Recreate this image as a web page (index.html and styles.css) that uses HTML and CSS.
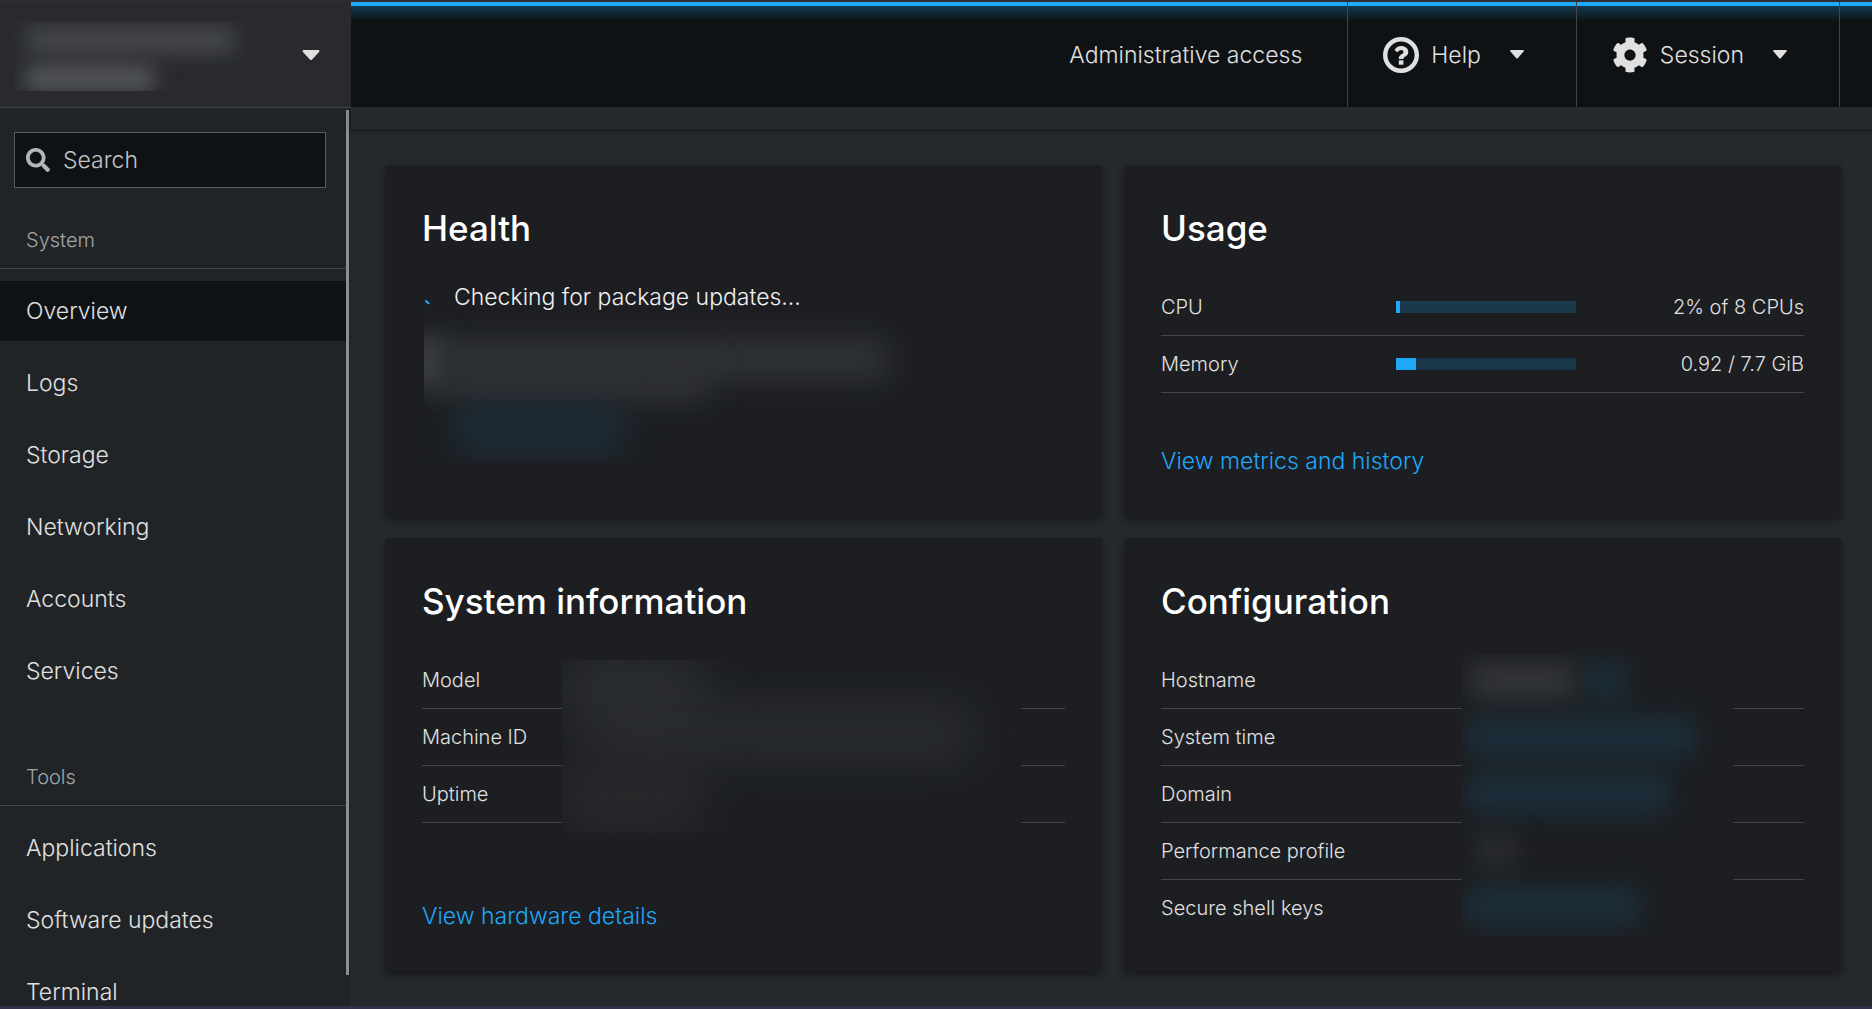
FILE: index.html
```html
<!DOCTYPE html>
<html lang="en">

<head>
    <meta charset="UTF-8">
    <meta name="viewport" content="width=device-width, initial-scale=1.0">
    <title>Overview</title>
    <link rel="stylesheet" href="styles.css">
</head>

<body>
    <div class="shell">
        <!-- Sidebar -->
        <aside class="sidebar">
            <button type="button" class="host-switcher" aria-label="Hosts">
                <span class="host-name">
                    <span class="smudge host-user"></span>
                    <span class="smudge host-address"></span>
                </span>
                <svg class="caret-lg" viewBox="0 0 20 12"><path d="M2 0H18Q20 0 19 2L11.500 10Q10 12 8.500 10L1 2Q0 0 2 0Z" /></svg>
            </button>
            <div class="sidebar-scroll">
                <nav class="nav">
                    <div class="search">
                        <svg class="search-icon" viewBox="0 0 512 512"><path d="M505 442.700L405.300 343c-4.500-4.500-10.600-7-17-7H372c27.600-35.300 44-79.700 44-128C416 93.100 322.900 0 208 0S0 93.100 0 208s93.100 208 208 208c48.300 0 92.700-16.400 128-44v16.300c0 6.400 2.500 12.500 7 17l99.700 99.700c9.400 9.400 24.600 9.400 33.900 0l28.300-28.300c9.400-9.400 9.400-24.600.1-34zM208 336c-70.700 0-128-57.200-128-128 0-70.700 57.200-128 128-128 70.700 0 128 57.200 128 128 0 70.700-57.200 128-128 128z" /></svg>
                        <input type="text" id="search" placeholder="Search" aria-label="Search">
                    </div>
                    <h2 class="nav-title">System</h2>
                    <ul class="nav-list">
                        <li><a href="#overview" class="active">Overview</a></li>
                        <li><a href="#logs">Logs</a></li>
                        <li><a href="#storage">Storage</a></li>
                        <li><a href="#networking">Networking</a></li>
                        <li><a href="#accounts">Accounts</a></li>
                        <li><a href="#services">Services</a></li>
                    </ul>
                    <h2 class="nav-title">Tools</h2>
                    <ul class="nav-list">
                        <li><a href="#applications">Applications</a></li>
                        <li><a href="#updates">Software updates</a></li>
                        <li><a href="#terminal">Terminal</a></li>
                    </ul>
                </nav>
                <div class="scroll-thumb"></div>
            </div>
        </aside>

        <div class="page">
            <!-- Top bar -->
            <header class="topbar">
                <button type="button" class="access">Administrative access</button>
                <button type="button" class="menu">
                    <svg class="menu-icon" viewBox="0 0 36 36">
                        <circle cx="18" cy="18" r="15.800" fill="none" stroke="currentColor" stroke-width="4.400" />
                        <path d="M11.500 13.200C13 10.400 15.300 9 18.300 9c3.800 0 7 2.500 7 5.900 0 4.500-4.900 4.700-4.900 6.600v.5h-4.600v-.8c0-3.500 4.700-3.900 4.700-6.100 0-1.200-1-2-2.300-2-1.600 0-2.500.8-3.500 2.200z" />
                        <rect x="15.800" y="23.300" width="4.600" height="4.400" />
                    </svg>
                    <span>Help</span>
                    <svg class="caret" viewBox="0 0 14 9"><path d="M1 0H13Q14.500 0 13.500 1.500L8 8Q7 9 6 8L.5 1.500Q-.5 0 1 0Z" /></svg>
                </button>
                <button type="button" class="menu">
                    <svg class="menu-icon" viewBox="0 0 512 512"><path d="M487.400 315.700l-42.600-24.600c4.300-23.200 4.300-47 0-70.200l42.600-24.600c4.900-2.800 7.100-8.600 5.500-14-11.100-35.600-30-67.800-54.700-94.600-3.800-4.100-10-5.100-14.800-2.300L380.800 110c-17.900-15.400-38.500-27.300-60.800-35.100V25.800c0-5.600-3.900-10.500-9.400-11.700-36.700-8.200-74.300-7.800-109.200 0-5.500 1.200-9.400 6.100-9.400 11.700V75c-22.200 7.900-42.800 19.800-60.800 35.100L88.700 85.500c-4.900-2.800-11-1.900-14.800 2.300-24.700 26.700-43.600 58.900-54.700 94.600-1.700 5.400.6 11.200 5.500 14L67.300 221c-4.300 23.200-4.300 47 0 70.200l-42.600 24.600c-4.900 2.800-7.100 8.600-5.500 14 11.100 35.600 30 67.800 54.700 94.600 3.800 4.100 10 5.100 14.800 2.300l42.600-24.600c17.900 15.400 38.500 27.300 60.800 35.100v49.200c0 5.600 3.900 10.500 9.400 11.700 36.700 8.200 74.300 7.800 109.200 0 5.500-1.200 9.400-6.100 9.400-11.700v-49.200c22.200-7.900 42.800-19.800 60.800-35.100l42.600 24.600c4.900 2.800 11 1.900 14.800-2.300 24.700-26.700 43.600-58.900 54.700-94.600 1.500-5.500-.7-11.300-5.600-14.100zM256 336c-44.100 0-80-35.900-80-80s35.900-80 80-80 80 35.900 80 80-35.900 80-80 80z" /></svg>
                    <span>Session</span>
                    <svg class="caret" viewBox="0 0 14 9"><path d="M1 0H13Q14.500 0 13.500 1.500L8 8Q7 9 6 8L.5 1.500Q-.5 0 1 0Z" /></svg>
                </button>
            </header>
            <div class="subheader"></div>

            <!-- Overview cards -->
            <main class="cards">
                <section class="card">
                    <h2>Health</h2>
                    <div class="card-body">
                        <p class="health-item">
                            <svg class="spinner" viewBox="0 0 24 24"><path d="M3 16Q5 16 7 19" /></svg>
                            Checking for package updates...
                        </p>
                        <div class="redacted redacted-health">
                            <span class="smudge login-icon"></span>
                            <span class="smudge login-line"></span>
                            <span class="smudge login-more"></span>
                            <span class="smudge login-link"></span>
                        </div>
                    </div>
                </section>

                <section class="card">
                    <h2>Usage</h2>
                    <table class="usage">
                        <tr>
                            <th scope="row">CPU</th>
                            <td class="meter-cell"><div class="meter"><div class="meter-value" style="width: 2%"></div></div></td>
                            <td class="amount">2% of 8 CPUs</td>
                        </tr>
                        <tr>
                            <th scope="row">Memory</th>
                            <td class="meter-cell"><div class="meter"><div class="meter-value" style="width: 11%"></div></div></td>
                            <td class="amount">0.92 / 7.7 GiB</td>
                        </tr>
                    </table>
                    <a class="card-link" href="#metrics">View metrics and history</a>
                </section>

                <section class="card">
                    <h2>System information</h2>
                    <div class="card-body">
                        <table>
                            <tr><th scope="row">Model</th></tr>
                            <tr><th scope="row">Machine ID</th></tr>
                            <tr><th scope="row">Uptime</th></tr>
                        </table>
                        <div class="redacted redacted-system">
                            <span class="smudge model"></span>
                            <span class="smudge machine"></span>
                            <span class="smudge uptime"></span>
                        </div>
                    </div>
                    <a class="card-link" href="#hardware">View hardware details</a>
                </section>

                <section class="card card-config">
                    <h2>Configuration</h2>
                    <div class="card-body">
                        <table class="config">
                            <tr><th scope="row">Hostname</th></tr>
                            <tr><th scope="row">System time</th></tr>
                            <tr><th scope="row">Domain</th></tr>
                            <tr><th scope="row">Performance profile</th></tr>
                            <tr><th scope="row">Secure shell keys</th></tr>
                        </table>
                        <div class="redacted redacted-config">
                            <span class="smudge hostname"></span>
                            <span class="smudge blue hostname-edit"></span>
                            <span class="smudge blue time"></span>
                            <span class="smudge blue domain"></span>
                            <span class="smudge profile"></span>
                            <span class="smudge blue keys"></span>
                        </div>
                    </div>
                </section>
            </main>
        </div>
    </div>
</body>

</html>
```
FILE: styles.css
```css
:root {
    --page-bg: #26292d;
    --sidebar-bg: #212427;
    --dark-bg: #0f1214;
    --card-bg: #1c1e21;
    --line: #444548;
    --text: #e0e0e0;
    --muted: #a3a5a8;
    --accent: #1fa7f8;
}

* {
    margin: 0;
    padding: 0;
    box-sizing: border-box;
}

body {
    background: var(--page-bg);
    color: var(--text);
    font-family: Inter, "Open Sans", sans-serif;
    font-size: 23px;
    font-weight: 300;
    line-height: 36px;
}

button,
input {
    font: inherit;
    color: inherit;
    border: none;
    background: none;
}

button {
    cursor: pointer;
}

a {
    color: inherit;
    text-decoration: none;
}

ul {
    list-style: none;
}

svg {
    fill: currentColor;
    flex: none;
}

.shell {
    height: 100vh;
    display: flex;
    border-top: 2px solid #2b2d31;
    border-bottom: 3px solid #33304a;
}

/* Sidebar */
.sidebar {
    width: 351px;
    flex: none;
    display: flex;
    flex-direction: column;
    background: var(--sidebar-bg);
}

.host-switcher {
    height: 106px;
    flex: none;
    display: flex;
    align-items: center;
    justify-content: space-between;
    padding: 2px 30px 0 14px;
    background: #282a2e;
    border-bottom: 1px solid #414447;
}

.host-name {
    width: 250px;
    height: 70px;
    position: relative;
    overflow: hidden;
}

.caret-lg {
    width: 20px;
    height: 11px;
}

.sidebar-scroll {
    flex: 1;
    min-height: 0;
    display: flex;
}

.nav {
    flex: 1;
    padding-top: 24px;
    overflow: hidden;
}

.search {
    height: 56px;
    margin: 0 20px 0 14px;
    padding-left: 11px;
    display: flex;
    align-items: center;
    gap: 13px;
    background: var(--dark-bg);
    border: 1px solid #56595c;
}

.search-icon {
    width: 24px;
    height: 24px;
    color: #b4b6b8;
}

.search input {
    flex: 1;
    min-width: 0;
    outline: none;
}

.search input::placeholder {
    color: #c3c5c7;
    opacity: 1;
}

.nav-title {
    padding: 34px 26px 10px;
    font-size: 20px;
    font-weight: 300;
    color: var(--muted);
    border-bottom: 1px solid var(--line);
}

.nav-list {
    padding: 12px 0 24px;
    display: flex;
    flex-direction: column;
    gap: 12px;
}

.nav-list a {
    display: block;
    padding: 12px 26px;
}

.nav-list .active {
    background: var(--dark-bg);
}

.scroll-thumb {
    width: 3px;
    margin: 2px 2px 31px 0;
    background: #8b8d90;
}

/* Top bar */
.page {
    flex: 1;
    min-width: 0;
    display: flex;
    flex-direction: column;
}

.topbar {
    height: 105px;
    flex: none;
    display: flex;
    justify-content: flex-end;
    padding-right: 32px;
    background: linear-gradient(var(--accent) 4px, #123b52 4px, var(--dark-bg) 19px);
}

.access {
    padding: 0 45px;
}

.menu {
    display: flex;
    align-items: center;
    padding: 0 52px 0 35px;
    border-left: 1px solid #414447;
}

.menu:last-child {
    border-right: 1px solid #414447;
}

.menu-icon {
    width: 36px;
    height: 36px;
    margin-right: 12px;
}

.caret {
    width: 14px;
    height: 9px;
    margin-left: 29px;
}

.subheader {
    height: 22px;
    flex: none;
    box-shadow: 0 2px 4px rgba(0, 0, 0, .4);
}

/* Cards */
.cards {
    display: grid;
    grid-template-columns: 1fr 1fr;
    gap: 22px;
    padding: 36px 31px 0 34px;
}

.card {
    display: flex;
    flex-direction: column;
    padding: 37px;
    background: var(--card-bg);
    border-radius: 3px;
    box-shadow: 0 4px 10px rgba(0, 0, 0, .4);
}

.card-config {
    padding-bottom: 35px;
}

.card h2 {
    margin-bottom: 25px;
    color: #fff;
    font-size: 35px;
    font-weight: 500;
    line-height: 52px;
}

.card-body {
    position: relative;
}

.card-link {
    align-self: flex-start;
    margin-top: auto;
    color: var(--accent);
}

.usage {
    margin-bottom: 50px;
}

.health-item {
    display: flex;
    align-items: center;
    gap: 8px;
    color: #f0f0f0;
}

.spinner {
    width: 24px;
    height: 24px;
    fill: none;
    stroke: var(--accent);
    stroke-width: 2;
}

table {
    width: 100%;
    border-spacing: 0;
    font-size: 20px;
}

th,
td {
    height: 57px;
    border-bottom: 1px solid var(--line);
    text-align: left;
    font-weight: 300;
}

.config tr:last-child th {
    height: 56px;
    border-bottom: none;
}

.usage th {
    width: 235px;
}

.amount {
    text-align: right;
}

.meter-cell {
    width: 180px;
}

.meter {
    height: 12px;
    background: #1b384a;
}

.meter-value {
    height: 100%;
    background: var(--accent);
}

/* Hidden values */
.redacted {
    position: absolute;
    overflow: hidden;
    background: var(--card-bg);
}

.smudge {
    position: absolute;
    background: #323437;
    filter: blur(12px);
}

.blue {
    background: #1c2e3a;
}

.host-user {
    inset: 6px 30px 38px 12px;
    background: #46484c;
    filter: blur(10px);
}

.host-address {
    inset: 45px 110px 0 12px;
    background: #56585c;
    filter: blur(10px);
}

.redacted-health {
    top: 36px;
    left: 2px;
    width: 510px;
    height: 148px;
}

.login-icon {
    inset: 22px 490px 76px -8px;
    background: #484a4e;
}

.login-line {
    inset: 24px 46px 84px 14px;
    filter: blur(16px);
}

.login-more {
    inset: 50px 226px 62px 14px;
    background: #303236;
    filter: blur(16px);
}

.login-link {
    inset: 90px 310px 8px 32px;
    background: #1d2c37;
    filter: blur(16px);
}

.redacted-system {
    top: 8px;
    left: 140px;
    right: 44px;
    height: 173px;
}

.model {
    inset: -10px 320px 100px 0;
    background: #2b2d30;
    filter: blur(24px);
}

.machine {
    inset: 46px 50px 72px 34px;
    background: #2b2d30;
    filter: blur(24px);
}

.uptime {
    inset: 100px 320px 0 0;
    background: #28292c;
    filter: blur(24px);
}

.redacted-config {
    top: 2px;
    left: 301px;
    right: 71px;
    height: 282px;
}

.hostname {
    inset: 8px 156px 236px 8px;
}

.hostname-edit {
    inset: 8px 106px 236px 122px;
}

.time {
    inset: 62px 38px 178px 6px;
}

.domain {
    inset: 118px 64px 122px 6px;
}

.profile {
    inset: 180px 216px 68px 14px;
    background: #2a2c2f;
}

.keys {
    inset: 232px 94px 10px 4px;
}
```
